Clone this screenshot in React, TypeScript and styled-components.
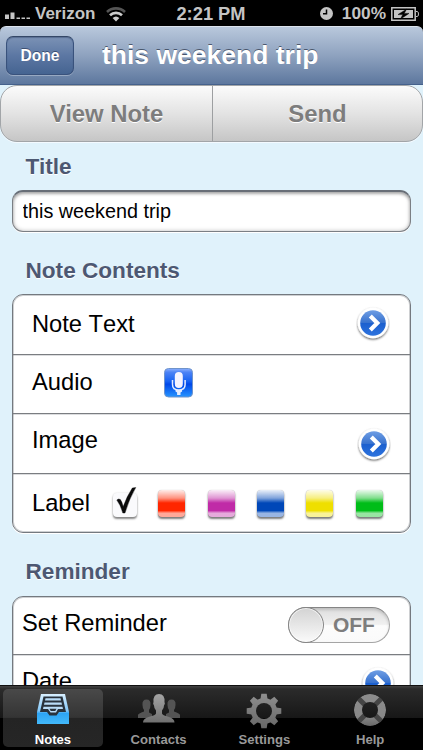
import React from "react";
import styled, { createGlobalStyle } from "styled-components";

interface LabelProps {
  lift?: number;
}

interface ActiveProps {
  $active?: boolean;
}

const GlobalStyle = createGlobalStyle`
  * {
    box-sizing: border-box;
  }

  body {
    margin: 0;
    background: #000;
    font-family: "Liberation Sans", Arial, sans-serif;
  }

  button {
    font-family: inherit;
    padding: 0;
    border: 0;
  }

  svg {
    display: block;
    flex-shrink: 0;
  }
`;

const Screen = styled.div`
  display: flex;
  flex-direction: column;
  width: 423px;
  height: 750px;
  overflow: hidden;
  background: #000;
`;

const StatusBar = styled.div`
  display: grid;
  grid-template-columns: 1fr auto 1fr;
  align-items: center;
  flex-shrink: 0;
  height: 26px;
  padding: 1px 4px 0 5px;
  color: #c4c4c4;
  font-size: 17px;
  font-weight: bold;
`;

const StatusGroup = styled.div<{ $end?: boolean }>`
  display: flex;
  align-items: center;
  justify-content: ${(props) => (props.$end ? "flex-end" : "flex-start")};
`;

const Carrier = styled.span`
  margin: 0 11px 0 5px;
`;

const Clock = styled.span`
  margin-right: 2px;
  font-size: 18.3px;
`;

const Battery = styled.span`
  margin: 0 5px 0 9px;
  font-size: 17.3px;
`;

const Header = styled.header`
  display: flex;
  align-items: center;
  flex-shrink: 0;
  height: 59px;
  padding: 0 6px;
  border-top: 1px solid #dce3ec;
  border-bottom: 1px solid #45618c;
  border-radius: 6px 6px 0 0;
  background: linear-gradient(#b9c8dc, #8ea2bf 50%, #5d779e);
`;

const DoneButton = styled.button`
  width: 68px;
  height: 39px;
  border: 1px solid #39527c;
  border-top-color: #344766;
  border-radius: 7px;
  color: #fff;
  background: linear-gradient(#7b92b5, #5c77a3 50%, #456491);
  box-shadow: inset 0 1px 1px rgba(40, 60, 95, 0.4),
    0 1px 0 rgba(255, 255, 255, 0.3);
  font-size: 15.6px;
  font-weight: bold;
  line-height: 35px;
  text-shadow: 0 -1px 0 rgba(30, 45, 75, 0.6);
`;

const HeaderTitle = styled.h1`
  margin: 0 0 1px 28px;
  color: #fff;
  font-size: 26.5px;
  line-height: 32px;
  text-shadow: 0 -1px 0 rgba(40, 50, 70, 0.7);
`;

const Content = styled.main`
  flex: 1;
  min-height: 0;
  overflow: hidden;
  background: #e0f2fb;
`;

const Segments = styled.div`
  display: grid;
  grid-template-columns: 211px 1fr;
  height: 57px;
  border: 1px solid #a2a5a8;
  border-radius: 17px;
  background: linear-gradient(#fbfbfb, #e3e3e3 50%, #c6c6c6);
  box-shadow: 0 1px 0 #f4faff;
`;

const Segment = styled.button`
  color: #7d7d7d;
  background: none;
  font-size: 23.9px;
  font-weight: bold;
  line-height: 55px;
  text-shadow: 0 1px 0 #fff;

  & + & {
    border-left: 1px solid #9d9fa1;
  }
`;

const SectionTitle = styled.h2`
  color: #4d5872;
  font-size: 22.6px;
  line-height: 26px;
  text-shadow: 0 1px 0 #fff;
`;

const Section = styled.section<{ $top: number; $gap: number }>`
  padding: ${(props) => props.$top}px 12px 0;

  ${SectionTitle} {
    margin: 0 0 ${(props) => props.$gap}px 13.5px;
  }
`;

const TitleInput = styled.input`
  display: block;
  width: 399px;
  height: 42px;
  padding: 0 10px 1px 9.5px;
  border: 1px solid #7b7f84;
  border-top: 2px solid #686e77;
  border-radius: 11px;
  outline: 0;
  color: #000;
  background: #fff;
  box-shadow: inset 0 2px 3px rgba(0, 0, 0, 0.25),
    inset 0 0 4px rgba(0, 0, 0, 0.25), 0 1px 0 #fff;
  font-family: inherit;
  font-size: 19.8px;
`;

const Card = styled.div`
  width: 399px;
  border: 1px solid #74797f;
  border-radius: 11px;
  background: #fff;
  box-shadow: inset 0 0 0 1px rgba(116, 121, 127, 0.35), 0 1px 0 #fff;
`;

const Row = styled.div<{ $height: number; $inset?: number }>`
  display: flex;
  align-items: center;
  height: ${(props) => props.$height}px;
  padding: 0 20px 0 ${(props) => props.$inset ?? 19}px;

  & + & {
    border-top: 1px solid #7a7d81;
    box-shadow: inset 0 1px 0 rgba(116, 121, 127, 0.25);
  }
`;

const RowText = styled.span<{ $lift: number; $width?: number }>`
  width: ${(props) => (props.$width ? `${props.$width}px` : "auto")};
  padding-bottom: ${(props) => props.$lift}px;
  color: #000;
  font-size: 23.7px;
  font-kerning: none;
  line-height: 28px;
`;

const DisclosureButton = styled.button<{ $right: number; $lift: number }>`
  margin: 0 ${(props) => props.$right}px ${(props) => props.$lift}px auto;
  background: none;
`;

const MicButton = styled.button`
  margin-bottom: 3px;
  background: none;
`;

const Swatches = styled.div`
  display: flex;
  align-items: center;
  margin-left: 22px;
`;

const Swatch = styled.button<{ $color: string; $gap: number }>`
  width: 27px;
  height: 27px;
  margin-left: ${(props) => props.$gap}px;
  border-radius: 4px;
  background: linear-gradient(
      rgba(255, 255, 255, 0.92),
      rgba(255, 255, 255, 0.5) 30%,
      rgba(255, 255, 255, 0) 48%,
      rgba(255, 255, 255, 0) 76%,
      rgba(255, 255, 255, 0.6) 86%,
      rgba(255, 255, 255, 0.6)
    ),
    ${(props) => props.$color};
  box-shadow: 0 2px 2px rgba(0, 0, 0, 0.5), 0 0 1px rgba(0, 0, 0, 0.3);
`;

const CheckBox = styled.button`
  width: 24px;
  height: 24px;
  margin: 3px 0 0 1px;
  border-radius: 4px;
  background: #fafafc;
  box-shadow: 0 2px 2px rgba(0, 0, 0, 0.45), 0 0 2px rgba(0, 0, 0, 0.15);

  svg {
    margin: -7px 0 0 3px;
    overflow: visible;
  }
`;

const Toggle = styled.div`
  display: flex;
  align-items: center;
  width: 102px;
  height: 36px;
  margin: 0 0 1px auto;
  border: 1px solid #a5a5a5;
  border-top-color: #858585;
  border-radius: 18px;
  background: linear-gradient(#dedede, #f0f0f0 48%, #fcfcfc 52%, #fafafa);
  box-shadow: inset 0 2px 3px rgba(0, 0, 0, 0.15);
`;

const Knob = styled.span`
  width: 36px;
  height: 36px;
  margin-left: -1px;
  border: 1px solid #858585;
  border-radius: 50%;
  background: linear-gradient(#d3d3d3, #fafafa);
  box-shadow: inset 0 0 0 1px rgba(255, 255, 255, 0.6);
`;

const ToggleText = styled.span`
  margin-left: 9px;
  color: #7d7d7d;
  font-size: 21px;
  font-weight: bold;
  letter-spacing: -0.1px;
`;

const TabBar = styled.nav`
  display: grid;
  grid-template-columns: repeat(4, 1fr);
  flex-shrink: 0;
  height: 65px;
  border-top: 1px solid #101010;
  background: linear-gradient(#424242, #2b2b2b 3px, #171717 50%, #000 50%);
`;

const Tab = styled.button<ActiveProps>`
  display: flex;
  flex-direction: column;
  align-items: center;
  justify-content: space-between;
  margin: 3px 3px 3px;
  padding: 4px 0 0;
  border-radius: 5px;
  color: ${(props) => (props.$active ? "#fff" : "#999")};
  background: ${(props) =>
    props.$active
      ? "linear-gradient(#494949, #343434 49%, #242424 50%, #262626)"
      : "none"};
  font-size: 13.1px;
  font-weight: bold;
  line-height: 14px;
`;

const SignalIcon = () => (
  <svg width="25" height="14" viewBox="0 0 25 14" fill="#c4c4c4">
    <path d="M0 7.500h4V12H0zM5.500 5.500h4V12h-4z" />
    <path d="M11.500 10.500H15V12h-3.500zM16.500 10.500H20V12h-3.500zM21.500 10.500H25V12h-3.500z" />
  </svg>
);

const WifiIcon = () => (
  <svg width="20" height="16" viewBox="0 0 20 16" fill="none">
    <path d="M1 6a13 13 0 0 1 18 0" stroke="#555" strokeWidth="2.600" />
    <path d="M4 9.300a8.600 8.600 0 0 1 12 0" stroke="#ccc" strokeWidth="2.600" />
    <path d="M6.600 12a5 5 0 0 1 6.800 0L10 15.500z" fill="#ccc" />
  </svg>
);

const AlarmIcon = () => (
  <svg width="13" height="13" viewBox="0 0 13 13">
    <circle cx="6.500" cy="6.500" r="6.500" fill="#c4c4c4" />
    <path d="M6.500 2.500v4.300H3" fill="none" stroke="#000" strokeWidth="1.500" />
  </svg>
);

const BatteryIcon = () => (
  <svg width="28" height="14" viewBox="0 0 28 14">
    <path
      d="M.8.800h23.400v12.400H.8z"
      fill="none"
      stroke="#c4c4c4"
      strokeWidth="1.500"
    />
    <path d="M25 4.500h1.200q1.300 0 1.300 2.500t-1.300 2.500H25" fill="none" stroke="#c4c4c4" />
    <path d="M3 3h19v8H3z" fill="#c4c4c4" />
    <path
      d="M15.500 2.200L7 7.600h4.800L9.500 12 18 6.400h-4.800z"
      fill="#000"
      stroke="#000"
      strokeWidth=".5"
    />
  </svg>
);

const DisclosureIcon = () => (
  <svg width="34" height="36" viewBox="0 0 34 36">
    <defs>
      <linearGradient id="disclosure" x2="0" y2="1">
        <stop offset="0" stopColor="#6f9ee4" />
        <stop offset=".48" stopColor="#3973cf" />
        <stop offset=".52" stopColor="#1c60cf" />
        <stop offset="1" stopColor="#2d73de" />
      </linearGradient>
      <filter id="disclosure-shadow" x="-20%" y="-20%" width="140%" height="150%">
        <feDropShadow dx="0" dy="1.200" stdDeviation="1" floodOpacity=".65" />
      </filter>
    </defs>
    <circle cx="17" cy="17" r="15.300" fill="#fff" filter="url(#disclosure-shadow)" />
    <circle cx="17" cy="17" r="12.800" fill="url(#disclosure)" />
    <path
      d="M14.300 10l7 7-7 7"
      fill="none"
      stroke="#fff"
      strokeWidth="4.200"
    />
  </svg>
);

const MicIcon = () => (
  <svg width="29" height="30" viewBox="0 0 29 30">
    <defs>
      <linearGradient id="mic" x2="0" y2="1">
        <stop offset="0" stopColor="#8eb2ff" />
        <stop offset=".13" stopColor="#4d83f5" />
        <stop offset=".45" stopColor="#1762f2" />
        <stop offset=".55" stopColor="#0047e9" />
        <stop offset="1" stopColor="#2795ff" />
      </linearGradient>
    </defs>
    <rect x=".5" y=".5" width="28" height="28.500" rx="4" fill="url(#mic)" stroke="#7094cb" />
    <rect x="10.800" y="4" width="8" height="16" rx="4" fill="#f6f4ff" />
    <path
      d="M8.500 12v4.500q0 5.500 6.300 5.500t6.300-5.500V12"
      fill="none"
      stroke="#e6edff"
      strokeWidth="1.500"
    />
    <path d="M11.500 22h6.600v1.500l-1.600 1V27h-3.400v-2.500l-1.600-1z" fill="#e6edff" />
  </svg>
);

const CheckIcon = () => (
  <svg width="22" height="28" viewBox="0 0 22 28">
    <path
      d="M.800 13q2-1.800 3.600-.4 1.600 2 2.800 7Q11 9 16.300 1l3.500-.5Q13.500 11 9 26H6.800Q4.500 18 .800 13z"
      fill="#090909"
      stroke="#090909"
      strokeWidth=".4"
    />
  </svg>
);

const NotesIcon = () => (
  <svg width="34" height="32" viewBox="0 0 34 32">
    <defs>
      <linearGradient id="notes" x2="0" y2="1">
        <stop offset="0" stopColor="#d8efff" />
        <stop offset=".55" stopColor="#85c8f8" />
        <stop offset=".65" stopColor="#2da4f4" />
        <stop offset="1" stopColor="#43b9fa" />
      </linearGradient>
    </defs>
    <path d="M5 1h24l4 18v12H1V19z" fill="url(#notes)" />
    <path
      d="M7.500 3.500h19L30 19h-7l-2.500 3.500h-7L11 19H4z"
      fill="#29323c"
    />
    <path
      d="M9.500 5.300h15l.5 2.200H9zM8.500 9.500h17l.5 2.200H8zM7.500 13.700h19l.5 2.300h-5l-2 3.500h-5.500L12 16H7z"
      fill="#b9dcf7"
    />
    <path d="M13.500 15.700h7l-1.200 2.300h-4.600z" fill="#29323c" />
  </svg>
);

const ContactsIcon = () => (
  <svg width="44" height="32" viewBox="0 0 44 32">
    <defs>
      <linearGradient id="contacts" x2="0" y2="1">
        <stop offset="0" stopColor="#a5a5a5" />
        <stop offset="1" stopColor="#707070" />
      </linearGradient>
    </defs>
    <path
      d="M5.500 12q-.5-5.500 4-5.500t4 5.500q0 3-1.500 5v2.500l3 1.500v4H1v-3q0-1.500 6-3.500V17q-1.500-2-1.500-5zM30.500 12q-.5-5.500 4-5.500t4 5.500q0 3-1.500 5v1.500q6 2 6 3.500v3H29v-4l3-1.500V17q-1.500-2-1.500-5z"
      fill="#545454"
    />
    <path
      d="M16.500 9Q16 1 22 1t5.500 8q1 1.500-.5 3.500 0 3-2 5v3q0 1.500 7 3.500 5.500 1.500 5.500 5.500H6q0-4 5.500-5.500 7.500-2 7.500-3.500v-3q-2-2-2-5-1.500-2-.5-3.500z"
      fill="url(#contacts)"
    />
  </svg>
);

const SettingsIcon = () => (
  <svg width="36" height="36" viewBox="-18 -18 36 36">
    <defs>
      <linearGradient id="settings" x2="0" y2="1">
        <stop offset="0" stopColor="#909090" />
        <stop offset="1" stopColor="#666" />
      </linearGradient>
      <mask id="gear">
        <g fill="#fff">
          <circle r="13" />
          {[0, 45, 90, 135, 180, 225, 270, 315].map((angle) => (
            <path
              key={angle}
              d="M-3.500-12l.8-5.300h5.400l.8 5.300z"
              transform={`rotate(${angle})`}
            />
          ))}
        </g>
        <circle r="8" fill="#000" />
      </mask>
    </defs>
    <rect
      x="-18"
      y="-18"
      width="36"
      height="36"
      fill="url(#settings)"
      mask="url(#gear)"
    />
  </svg>
);

const HelpIcon = () => (
  <svg width="34" height="34" viewBox="-17 -17 34 34">
    <defs>
      <linearGradient id="help" x2="0" y2="1">
        <stop offset="0" stopColor="#8c8c8c" />
        <stop offset=".7" stopColor="#888" />
        <stop offset="1" stopColor="#686868" />
      </linearGradient>
      <mask id="ring">
        <circle r="16" fill="#fff" />
        <circle r="8" fill="#000" />
      </mask>
    </defs>
    <g mask="url(#ring)">
      <circle r="16" fill="url(#help)" />
      <path
        d="M-13-13l26 26M13-13l-26 26"
        fill="none"
        stroke="#454545"
        strokeWidth="5"
      />
    </g>
  </svg>
);

const swatches = [
  { color: "#ff2600", gap: 21 },
  { color: "#c02ba7", gap: 23 },
  { color: "#0047b8", gap: 22 },
  { color: "#efdf00", gap: 22 },
  { color: "#00bd18", gap: 23 },
];

const tabs = [
  { name: "Notes", icon: <NotesIcon /> },
  { name: "Contacts", icon: <ContactsIcon /> },
  { name: "Settings", icon: <SettingsIcon /> },
  { name: "Help", icon: <HelpIcon /> },
];

const Status = () => (
  <StatusBar>
    <StatusGroup>
      <SignalIcon />
      <Carrier>Verizon</Carrier>
      <WifiIcon />
    </StatusGroup>
    <Clock>2:21 PM</Clock>
    <StatusGroup $end>
      <AlarmIcon />
      <Battery>100%</Battery>
      <BatteryIcon />
    </StatusGroup>
  </StatusBar>
);

const Label = ({ lift = 0, children }: React.PropsWithChildren<LabelProps>) => (
  <RowText $lift={lift}>{children}</RowText>
);

export default function App() {
  return (
    <Screen>
      <GlobalStyle />
      <Status />
      <Header>
        <DoneButton>Done</DoneButton>
        <HeaderTitle>this weekend trip</HeaderTitle>
      </Header>
      <Content>
        <Segments>
          <Segment>View Note</Segment>
          <Segment>Send</Segment>
        </Segments>
        <Section $top={12} $gap={10}>
          <SectionTitle>Title</SectionTitle>
          <TitleInput defaultValue="this weekend trip" />
        </Section>
        <Section $top={26} $gap={10}>
          <SectionTitle>Note Contents</SectionTitle>
          <Card>
            <Row $height={59}>
              <Label lift={2}>Note Text</Label>
              <DisclosureButton $right={0} $lift={1}>
                <DisclosureIcon />
              </DisclosureButton>
            </Row>
            <Row $height={59}>
              <RowText $lift={5} $width={132}>
                Audio
              </RowText>
              <MicButton>
                <MicIcon />
              </MicButton>
            </Row>
            <Row $height={60}>
              <Label lift={7}>Image</Label>
              <DisclosureButton $right={-1} $lift={-2}>
                <DisclosureIcon />
              </DisclosureButton>
            </Row>
            <Row $height={59}>
              <Label lift={1}>Label</Label>
              <Swatches>
                <CheckBox>
                  <CheckIcon />
                </CheckBox>
                {swatches.map((swatch) => (
                  <Swatch
                    key={swatch.color}
                    $color={swatch.color}
                    $gap={swatch.gap}
                  />
                ))}
              </Swatches>
            </Row>
          </Card>
        </Section>
        <Section $top={26} $gap={11}>
          <SectionTitle>Reminder</SectionTitle>
          <Card>
            <Row $height={57} $inset={9}>
              <Label lift={5}>Set Reminder</Label>
              <Toggle>
                <Knob />
                <ToggleText>OFF</ToggleText>
              </Toggle>
            </Row>
            <Row $height={59} $inset={9}>
              <Label lift={6}>Date</Label>
              <DisclosureButton $right={-5} $lift={0}>
                <DisclosureIcon />
              </DisclosureButton>
            </Row>
          </Card>
        </Section>
      </Content>
      <TabBar>
        {tabs.map((tab, index) => (
          <Tab key={tab.name} $active={index === 0}>
            {tab.icon}
            {tab.name}
          </Tab>
        ))}
      </TabBar>
    </Screen>
  );
}
